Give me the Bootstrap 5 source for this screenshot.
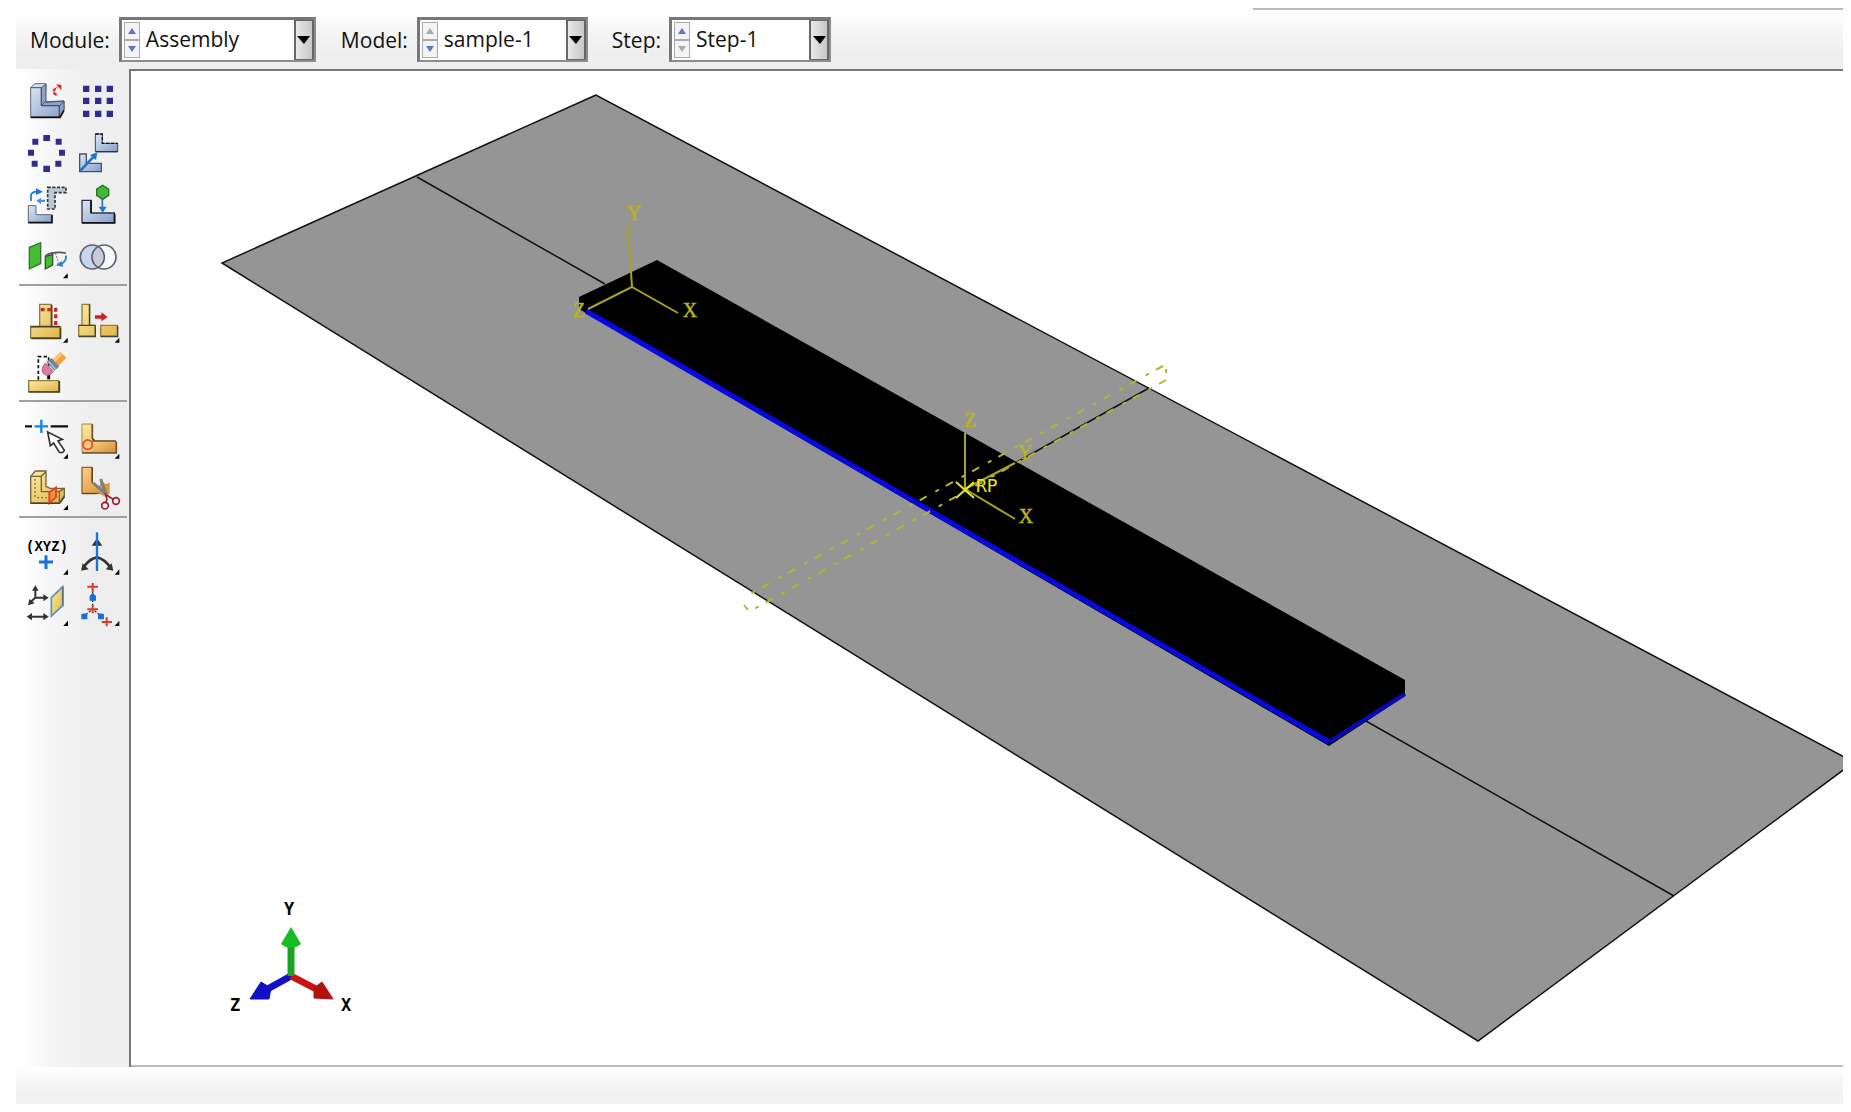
<!DOCTYPE html>
<html lang="en">
<head>
<meta charset="utf-8">
<meta name="viewport" content="width=device-width, initial-scale=1">
<title>Assembly module</title>
<link rel="stylesheet" href="https://cdn.jsdelivr.net/npm/bootstrap@5.3.0/dist/css/bootstrap.min.css">
<style>
body{background:#fefefe;font-family:"Open Sans","Noto Sans",sans-serif;color:#111;font-size:21px;line-height:28px}
.shell{padding:0 8px 0 16px}
.topstrip{height:10px}
.topstrip div{width:32.3%;border-bottom:2px solid #bcbcbc}
.ctxbar{height:59px;padding:7px 0 7px 14px;background:linear-gradient(#fefefe 0,#fefefe 6px,#f8f8f8 16px,#f2f2f2 32px,#eee 46px,#eee)}
.ctxlabel{margin-right:9px}
.combo{height:45px;border:2px solid #8c8c8c;border-top:3px solid #777;border-left:3px solid #777;background:#fff}
.combo-a{width:197px;margin-right:25px}
.combo-b{width:171px;margin-right:24px}
.combo-c{width:162px}
.ctxlabel-c{margin-right:8px}
.spin{width:16px;margin:2px 0 2px 2px}
.spin button{background:#f4f4f6;border:1px solid #aaa;color:#5a78c4}
.spin button:disabled{color:#aaa}
.combo select{appearance:none;border:0;background:#fff;min-width:0;padding:0 0 2px 6px;color:#111;outline:0}
.drop{width:20px;border:2px solid #666;border-width:1px 2px;background:linear-gradient(90deg,#e8e8e8,#c8c8c8)}
.toolcol{width:115px;padding:6px 2px 0 4px;border-right:2px solid #777;background:linear-gradient(90deg,#fefefe 6px,#f6f6f6 34px,#eee 74px)}
.tools{display:grid;grid-template-columns:51px 51px;grid-auto-rows:52px}
.tools button{background:none;border:0;padding:0}
.tools svg{display:block;width:51px;height:52px}
.rule{height:2px;background:#a0a0a0;margin:1px 0 9px -1px}
.stage{border-top:2px solid #777;border-bottom:2px solid #bcbcbc;background:#fff}
.stage svg{display:block;width:100%;height:auto}
.statusbar{height:37px;background:linear-gradient(#fefefe 0,#fbfbfb 6px,#f6f6f6 14px,#f1f1f1 30px)}
</style>
<script src="https://cdn.jsdelivr.net/npm/bootstrap@5.3.0/dist/js/bootstrap.bundle.min.js"></script>
</head>
<body>
<svg width="0" height="0" class="position-absolute" aria-hidden="true"><defs>
<linearGradient id="steel" x2="1" y2="1"><stop stop-color="#dfe7f5"/><stop offset="1" stop-color="#869fcd"/></linearGradient>
<linearGradient id="gold" x2="1" y2="1"><stop stop-color="#fbeaa0"/><stop offset="1" stop-color="#dfb64a"/></linearGradient>
<linearGradient id="amber" x2="1" y2="1"><stop stop-color="#fbd08a"/><stop offset="1" stop-color="#d98a30"/></linearGradient>
</defs></svg>
<div class="shell">
<div class="topstrip d-flex justify-content-end"><div></div></div>
<header class="ctxbar d-flex align-items-center">
  <label class="ctxlabel" for="module">Module:</label>
  <div class="combo combo-a d-flex">
    <div class="spin d-flex flex-column"><button class="flex-fill d-flex align-items-center justify-content-center p-0" aria-label="Previous module"><svg width="8" height="7"><path d="M0 6L4 0L8 6z" fill="currentColor"/></svg></button><button class="flex-fill d-flex align-items-center justify-content-center p-0" aria-label="Next module"><svg width="8" height="7"><path d="M0 0L4 6L8 0z" fill="currentColor"/></svg></button></div>
    <select id="module" class="flex-fill"><option>Assembly</option></select>
    <button class="drop p-0 d-flex align-items-center justify-content-center" aria-label="Open module list"><svg width="13" height="8" class="flex-shrink-0"><path d="M0 0h13L7 8z"/></svg></button>
  </div>
  <label class="ctxlabel" for="model">Model:</label>
  <div class="combo combo-b d-flex">
    <div class="spin d-flex flex-column"><button disabled class="flex-fill d-flex align-items-center justify-content-center p-0" aria-label="Previous model"><svg width="8" height="7"><path d="M0 6L4 0L8 6z" fill="currentColor"/></svg></button><button class="flex-fill d-flex align-items-center justify-content-center p-0" aria-label="Next model"><svg width="8" height="7"><path d="M0 0L4 6L8 0z" fill="currentColor"/></svg></button></div>
    <select id="model" class="flex-fill"><option>sample-1</option></select>
    <button class="drop p-0 d-flex align-items-center justify-content-center" aria-label="Open model list"><svg width="13" height="8" class="flex-shrink-0"><path d="M0 0h13L7 8z"/></svg></button>
  </div>
  <label class="ctxlabel-c" for="step">Step:</label>
  <div class="combo combo-c d-flex">
    <div class="spin d-flex flex-column"><button class="flex-fill d-flex align-items-center justify-content-center p-0" aria-label="Previous step"><svg width="8" height="7"><path d="M0 6L4 0L8 6z" fill="currentColor"/></svg></button><button disabled class="flex-fill d-flex align-items-center justify-content-center p-0" aria-label="Next step"><svg width="8" height="7"><path d="M0 0L4 6L8 0z" fill="currentColor"/></svg></button></div>
    <select id="step" class="flex-fill"><option>Step-1</option></select>
    <button class="drop p-0 d-flex align-items-center justify-content-center" aria-label="Open step list"><svg width="13" height="8" class="flex-shrink-0"><path d="M0 0h13L7 8z"/></svg></button>
  </div>
</header>
<main class="d-flex">
<nav class="toolcol flex-shrink-0" aria-label="Toolbox">
 <div class="tools">
  <button aria-label="Create instance"><svg viewBox="60 30 153 156"><path d="M92 68L104 56H138V66L134 110L192 108V134L178 156H92z" fill="url(#steel)" stroke="#667" stroke-width="3"/><path d="M124 68L138 58V112L192 108V134L178 156V122H124z" fill="#8fa3c6" stroke="#46506a" stroke-width="3"/><path d="M92 68H124V122H178V156M124 122L136 110M178 122L192 110" fill="none" stroke="#46506a" stroke-width="3"/><path d="M92 157H180L192 136" fill="none" stroke="#111" stroke-width="5"/><path d="M170 90Q150 80 172 67" fill="none" stroke="#c92a20" stroke-width="6" stroke-dasharray="12 3"/><path d="M168 58L184 60V76z" fill="#c92a20"/></svg></button>
  <button aria-label="Linear pattern"><svg viewBox="213 30 153 156" fill="#332a90"><path d="M249 62h19v19h-19zM285 62h19v19h-19zM320 62h19v19h-19zM249 98h19v19h-19zM285 98h19v19h-19zM320 98h19v19h-19zM249 137h19v19h-19zM285 137h19v19h-19zM320 137h19v19h-19z"/></svg></button>
  <button aria-label="Radial pattern"><svg viewBox="60 186 153 156" fill="#332a90"><path d="M130 210h20v18h-20zM167 221h18v18h-18zM177 254h18v18h-18zM166 287h18v18h-18zM130 302h20v19h-20zM95 287h18v18h-18zM84 254h18v18h-18zM97 221h18v18h-18z"/></svg></button>
  <button aria-label="Translate instance"><svg viewBox="213 186 153 156"><path d="M286 207H307V235H353V260H286z" fill="url(#steel)" stroke="#445" stroke-width="3"/><path d="M286 207H307V235H353" fill="none" stroke="#111" stroke-width="4" stroke-dasharray="10 5"/><path d="M287 260H353" stroke="#333" stroke-width="4"/><path d="M239 267H259V295H304V320H239z" fill="url(#steel)" stroke="#46506a" stroke-width="4"/><path d="M241 317L282 274" stroke="#1877d2" stroke-width="8"/><path d="M292 262L288 285L270 270z" fill="#1877d2"/></svg></button>
  <button aria-label="Rotate instance"><svg viewBox="60 342 153 156"><path d="M143 367H198V383H165V432H143z" fill="#bcc6d8" stroke="#333" stroke-width="5" stroke-dasharray="9 5"/><path d="M85 422H108V449H154V472H85z" fill="url(#steel)" stroke="#667" stroke-width="3"/><path d="M85 473H156V449" fill="none" stroke="#111" stroke-width="5"/><path d="M93 408V390Q96 380 110 380" fill="none" stroke="#1877d2" stroke-width="5"/><path d="M108 370L129 380L108 390z" fill="#1877d2"/><path d="M109 407L123 398V404H135V411H123V418z" fill="#4a90dd"/></svg></button>
  <button aria-label="Translate to"><svg viewBox="213 342 153 156"><path d="M246 406H273V444H343V473H246z" fill="url(#steel)" stroke="#334" stroke-width="4"/><path d="M246 474H344V446M273 406V444" fill="none" stroke="#111" stroke-width="5"/><path d="M307 398V432" stroke="#1877d2" stroke-width="5"/><path d="M296 425H320L308 443z" fill="#1877d2"/><path d="M290 372L308 361L326 372V391L308 403L290 391z" fill="#42ba35" stroke="#2a7024" stroke-width="4"/></svg></button>
  <button aria-label="Position constraint"><svg viewBox="60 498 153 156"><path d="M88 547L122 533V596L88 612z" fill="#43bd32" stroke="#3d7039" stroke-width="4"/><path d="M136 575L158 568V600L136 612z" fill="#43bd32" stroke="#34562f" stroke-width="4"/><path d="M136 572Q160 558 198 564" fill="none" stroke="#555" stroke-width="5"/><path d="M166 564L174 588V602" fill="none" stroke="#777" stroke-width="3" stroke-dasharray="6 4"/><path d="M198 572Q200 588 184 597" fill="none" stroke="#3b86c8" stroke-width="6"/><path d="M168 601L184 588L190 606z" fill="#2f80d0"/><path d="M203 625V640H189z"/></svg></button>
  <button aria-label="Merge or cut"><svg viewBox="213 498 153 156"><circle cx="277" cy="576" r="36" fill="#c8d5ea"/><circle cx="312" cy="576" r="36" fill="#f7f8fb"/><path d="M294 544A36 36 0 0 1 294 608A36 36 0 0 1 294 544" fill="#c9cbdb"/><g fill="none" stroke="#596170" stroke-width="5"><circle cx="277" cy="576" r="36"/><circle cx="312" cy="576" r="36"/></g></svg></button>
 </div>
 <div class="rule"></div>
 <div class="tools">
  <button aria-label="Replace feature"><svg viewBox="60 60 153 156"><path d="M119 88H154V155H182V189H92V155H119z" fill="url(#gold)" stroke="#917b43" stroke-width="4"/><path d="M92 155H180M94 190H181V158M155 90V153" fill="none" stroke="#4a412b" stroke-width="5"/><path d="M122 104H152M167 98V154" stroke="#c92a20" stroke-width="10" stroke-dasharray="12 8"/><path d="M203 188V203H189z"/></svg></button>
  <button aria-label="Move feature"><svg viewBox="213 60 153 156"><path d="M246 88H268V151H286V183H236V151H246zM302 151H352V183H302z" fill="url(#gold)" stroke="#917b43" stroke-width="4"/><path d="M236 185H286V153M302 185H353V153M269 88V150M236 151H286" fill="none" stroke="#4a412b" stroke-width="4"/><path d="M285 121H304V112L323 126L304 139V131H285z" fill="#cf1f22"/><path d="M358 188V203H344z"/></svg></button>
  <button aria-label="Delete feature"><svg viewBox="60 216 153 156"><path d="M115 314V245H146V314" fill="none" stroke="#111" stroke-width="5" stroke-dasharray="10 7"/><path d="M86 317H176V350H86z" fill="url(#gold)" stroke="#917b43" stroke-width="4"/><path d="M86 351H178V318" fill="none" stroke="#4a412b" stroke-width="5"/><path d="M146 292V313" stroke="#111" stroke-width="9"/><path d="M156 256L181 231L199 248L173 275z" fill="#eda342"/><path d="M156 256L181 231L188 238L164 263z" fill="#fac66c"/><path d="M139 260L155 249L178 275L163 287z" fill="#74849c"/><path d="M146 259L167 283" stroke="#b9c7d8" stroke-width="4"/><path d="M137 264L160 289Q145 309 130 295Q120 282 137 264z" fill="#d97e9c" stroke="#a95e7d" stroke-width="3"/></svg></button>
 </div>
 <div class="rule"></div>
 <div class="tools">
  <button aria-label="Partition edge"><svg viewBox="60 408 153 156"><path d="M75 454H96M152 454H204" stroke="#111" stroke-width="7"/><path d="M104 454H144M124 434V474" stroke="#1682eb" stroke-width="7"/><path d="M143 471L151 512L161 504L178 532Q188 536 193 526L174 498L187 493z" fill="#fff" stroke="#333" stroke-width="5"/><path d="M204 536V551H190z"/></svg></button>
  <button aria-label="Partition face"><svg viewBox="213 408 153 156"><path d="M246 447H277V498H348V532H246z" fill="url(#gold)" stroke="#a8864b" stroke-width="3"/><path d="M277 498H348V532H277z" fill="url(#amber)"/><path d="M277 448V490L284 497M277 498H348M246 534H349V500" fill="none" stroke="#6a5230" stroke-width="5"/><circle cx="263" cy="509" r="14" fill="#f5c78b" stroke="#e4582a" stroke-width="6"/><path d="M358 536V551H344z"/></svg></button>
  <button aria-label="Partition cell"><svg viewBox="60 564 153 156"><path d="M92 604L106 588H138V634L150 640H193V662L178 684H92z" fill="url(#gold)" stroke="#75643a" stroke-width="4"/><path d="M92 604H124V650H178V684M124 604L138 590M178 650L193 640" fill="none" stroke="#75643a" stroke-width="4"/><path d="M105 612V666M112 668H140" stroke="#75643a" stroke-width="4" stroke-dasharray="5 7"/><path d="M148 652L168 638V667L148 684z" fill="#e99444" stroke="#df4a20" stroke-width="6"/><path d="M92 685H179L194 665" fill="none" stroke="#4a412b" stroke-width="4"/><path d="M204 690V705H190z"/></svg></button>
  <button aria-label="Cut geometry"><svg viewBox="213 564 153 156"><path d="M246 577H276V622L291 636L326 628V655H246z" fill="url(#amber)" stroke="#8d622f" stroke-width="4"/><path d="M277 577V622M247 656H290" stroke="#5e452b" stroke-width="4"/><path d="M297 656L302 612L318 630L328 622V655L316 665z" fill="#e0963f"/><path d="M280 624L316 656M302 612L318 656" stroke="#777f88" stroke-width="9"/><path d="M316 654L321 674L316 684M320 660L341 674" fill="none" stroke="#9d1d2b" stroke-width="5"/><circle cx="315" cy="692" r="10" fill="none" stroke="#9d1d2b" stroke-width="5"/><circle cx="348" cy="678" r="10" fill="none" stroke="#9d1d2b" stroke-width="5"/></svg></button>
 </div>
 <div class="rule"></div>
 <div class="tools">
  <button aria-label="Create datum point"><svg viewBox="60 81 153 156"><text x="78" y="152" font-family="Liberation Mono,monospace" font-weight="700" font-size="42">(XYZ)</text><path d="M117 186H159M138 166V207" stroke="#1b73d6" stroke-width="9"/><path d="M204 208V224H190z"/></svg></button>
  <button aria-label="Create datum axis"><svg viewBox="213 81 153 156"><path d="M251 201Q268 176 291 172Q314 178 330 201" fill="none" stroke="#333" stroke-width="8"/><path d="M243 212L248 190L266 208zM340 212L335 190L317 208zM275 137L291 115L307 137z" fill="#333"/><path d="M291 97V213" stroke="#1b73d6" stroke-width="7"/><path d="M358 208V224H344z"/></svg></button>
  <button aria-label="Create datum plane"><svg viewBox="60 237 153 156"><path d="M106 268V293H136M106 293L94 304M92 350H134" fill="none" stroke="#333" stroke-width="6"/><path d="M96 272L106 256L116 272zM130 283L146 293L130 304zM84 316L88 297L104 310zM80 350L96 339V361zM146 350L130 339V361z" fill="#333"/><path d="M154 293L188 260V317L154 348z" fill="url(#gold)" stroke="#5a8fc0" stroke-width="5"/><path d="M189 260V318" stroke="#556" stroke-width="3"/><path d="M204 362V378H190z"/></svg></button>
  <button aria-label="Create datum coordinate system"><svg viewBox="213 237 153 156"><path d="M262 260H294M278 249V275M262 328H294M278 315V340M305 366H336M320 352V379" stroke="#db3a2b" stroke-width="6"/><path d="M278 275V316M272 332L254 348M284 332L302 348" stroke="#333" stroke-width="4" stroke-dasharray="7 5"/><path d="M269 288L278 278L288 288V302H269zM244 342L258 340L262 346V358H244zM294 346L300 340L312 342V358H294z" fill="#1b6fd8"/><path d="M358 362V378H344z"/></svg></button>
 </div>
</nav>
<section class="stage flex-fill" aria-label="Viewport">
<svg viewBox="131 71 1712 994" role="img" aria-label="Assembly view">
 <path d="M596 95L222 263L1478 1041L1850 765V760z" fill="#959595" stroke="#111" stroke-width="1.5"/>
 <path d="M417 177L605 284M1366 721L1674 896M1017 462L1149 388" stroke="#111" stroke-width="1.5"/>
 <path d="M657 260L579 297V309L1329 746L1405 696V680z"/>
 <path d="M586 311L1329 742" fill="none" stroke="#0808e0" stroke-width="5"/>
 <path d="M1329 742L1405 694" fill="none" stroke="#0808b8" stroke-width="4"/>
 <g fill="none" stroke="#b4b432" stroke-width="2">
  <path d="M1163 366L750 594" stroke-dasharray="8 8 4 10"/><path d="M1166 380L754 609" stroke-dasharray="8 8 4 10"/>
  <path d="M1166 369V373M744 605L748 610"/>
 </g>
 <g fill="none" stroke="#aaa51c" stroke-width="2"><path d="M628 226L632 287L588 309M632 287L678 313M965 433V489L1015 463M965 489L1015 519"/></g>
 <path d="M956 482L974 498M956 498L974 482" stroke="#e6e62a" stroke-width="2"/>
 <g fill="#b8b41e" stroke="#b8b41e" stroke-width="0.5" font-family="Liberation Serif,serif" font-size="20" text-anchor="middle"><text x="634" y="220">Y</text><text x="690" y="317">X</text><text x="579" y="317">Z</text><text x="970" y="427">Z</text><text x="1025" y="459">Y</text><text x="1026" y="523">X</text></g>
 <text x="976" y="492" fill="#e6e62a" font-family="DejaVu Sans Mono,monospace" font-size="18">RP</text>
 <path d="M291 976L264 991" stroke="#1111c4" stroke-width="7"/><path d="M250 999L261 982L271 988L269 999z" fill="#1111c4" stroke="#1111c4"/>
 <path d="M291 976L320 991" stroke="#cc1414" stroke-width="7"/><path d="M333 999L322 982L314 988V998z" fill="#b31212" stroke="#b31212"/>
 <path d="M291 976V945" stroke="#18a420" stroke-width="7"/><path d="M291 927L281 944Q291 952 301 944z" fill="#18bc22"/>
 <g font-family="DejaVu Sans Mono,monospace" font-weight="700" font-size="17" text-anchor="middle"><text x="289" y="915">Y</text><text x="235" y="1011">Z</text><text x="346" y="1011">X</text></g>
</svg>
</section>
</main>
<footer class="statusbar"></footer>
</div>
</body>
</html>
